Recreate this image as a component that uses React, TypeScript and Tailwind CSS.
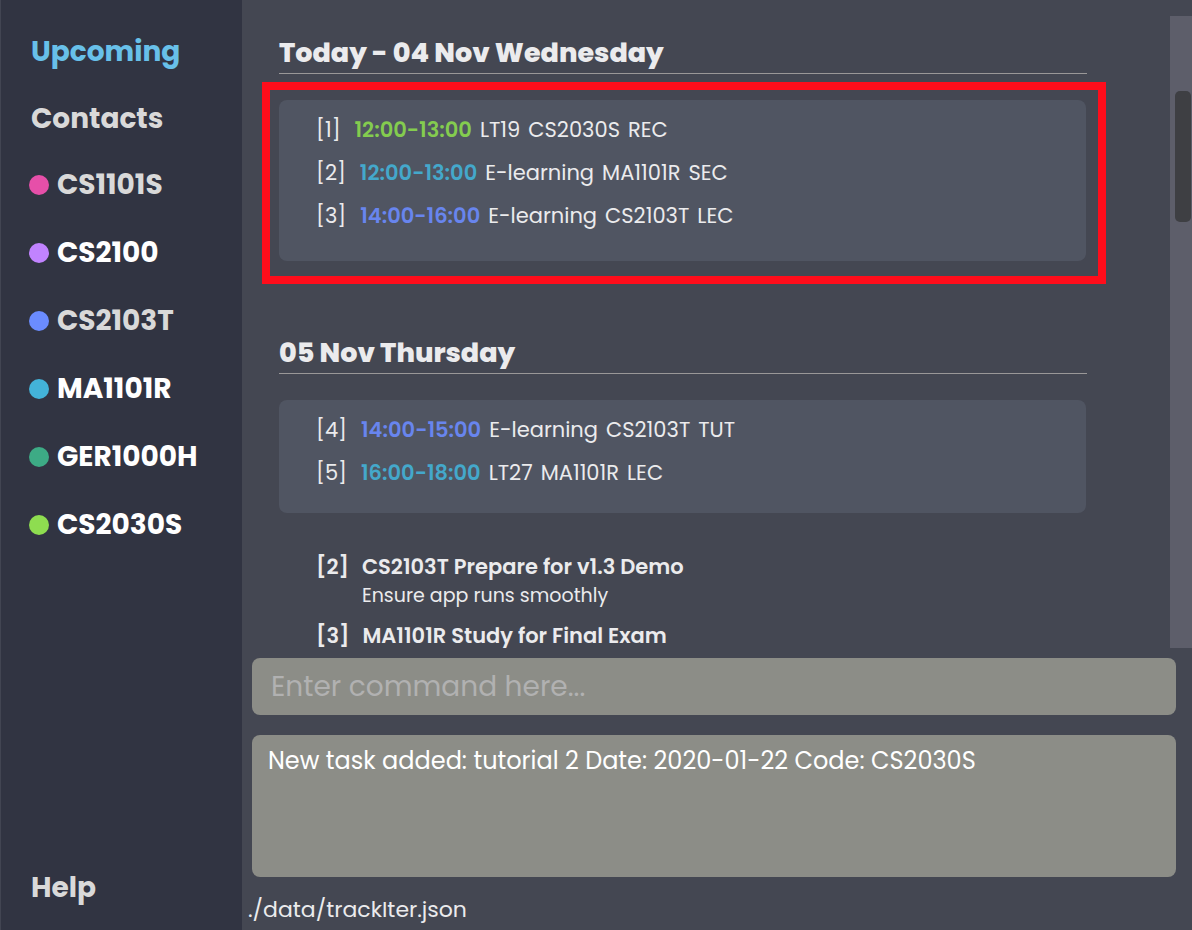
import React from "react";

type Lesson = { id: number; time: string; color: string; details: string[] };
type Task = { id: number; title: string; note?: string };

const modules = [
  { code: "CS1101S", dot: "bg-[#e64fa9]", text: "text-[#d9d9d9]" },
  { code: "CS2100", dot: "bg-[#c183ff]", text: "text-white" },
  { code: "CS2103T", dot: "bg-[#6b8cff]", text: "text-[#d9d9d9]" },
  { code: "MA1101R", dot: "bg-[#43b3d9]", text: "text-white" },
  { code: "GER1000H", dot: "bg-[#3dab85]", text: "text-white" },
  { code: "CS2030S", dot: "bg-[#8edd50]", text: "text-white" },
];

const today: Lesson[] = [
  { id: 1, time: "12:00-13:00", color: "text-[#84cc4f]", details: ["LT19", "CS2030S", "REC"] },
  { id: 2, time: "12:00-13:00", color: "text-[#44a8cb]", details: ["E-learning", "MA1101R", "SEC"] },
  { id: 3, time: "14:00-16:00", color: "text-[#6885ee]", details: ["E-learning", "CS2103T", "LEC"] },
];

const thursday: Lesson[] = [
  { id: 4, time: "14:00-15:00", color: "text-[#6885ee]", details: ["E-learning", "CS2103T", "TUT"] },
  { id: 5, time: "16:00-18:00", color: "text-[#44a8cb]", details: ["LT27", "MA1101R", "LEC"] },
];

const tasks: Task[] = [
  { id: 2, title: "CS2103T Prepare for v1.3 Demo", note: "Ensure app runs smoothly" },
  { id: 3, title: "MA1101R Study for Final Exam" },
];

function DayHeading({ children }: { children: React.ReactNode }) {
  return (
    <h2 className="-mr-px h-[41px] border-b border-[#9a9898] text-[27px] leading-10 font-extrabold whitespace-nowrap">
      {children}
    </h2>
  );
}

function LessonCard({ lessons, framed = false }: { lessons: Lesson[]; framed?: boolean }) {
  return (
    <div className={`relative mt-[26px] rounded-lg bg-[#505562] pt-2 pl-[37px] ${framed ? "pb-6" : "pb-[19px]"}`}>
      <ul>
        {lessons.map((l) => (
          <li key={l.id} className="flex h-[43px] items-center gap-2 text-[21px] whitespace-nowrap">
            <span className="mr-[6px]">[{l.id}]</span>
            <span className={`font-semibold ${l.color}`}>{l.time}</span>
            {l.details.map((d) => (
              <span key={d}>{d}</span>
            ))}
          </li>
        ))}
      </ul>
      {framed && (
        <div className="pointer-events-none absolute -top-[18px] -right-5 -bottom-[23px] -left-[17px] border-8 border-[#ff0d1b]" />
      )}
    </div>
  );
}

export default function App() {
  return (
    <div className="flex h-screen bg-[#444752] font-['Poppins','Inter',sans-serif] text-[#ebebed]">
      <nav className="flex w-[242px] shrink-0 flex-col border-l border-[#424552] bg-[#313442] pt-8 pb-[22px] text-[28px] leading-10 font-bold text-[#d9d9d9]">
        <div className="flex flex-col items-start gap-[27px] pl-[30px]">
          <button type="button" className="text-[#68c0e9]">Upcoming</button>
          <button type="button">Contacts</button>
        </div>
        <ul className="mt-[26px] flex flex-col gap-7 pl-7">
          {modules.map((m) => (
            <li key={m.code}>
              <button type="button" className={`flex items-center gap-2 ${m.text}`}>
                <span className={`size-5 rounded-full ${m.dot}`} />
                {m.code}
              </button>
            </li>
          ))}
        </ul>
        <button type="button" className="mt-auto self-start pl-[30px]">Help</button>
      </nav>

      <main className="flex min-w-0 flex-1 flex-col pt-4">
        <div className="flex min-h-0 flex-1">
          <div className="min-w-0 flex-1 overflow-hidden pt-[17px] pr-[84px] pl-[37px]">
            <section>
              <DayHeading>Today - 04 Nov Wednesday</DayHeading>
              <LessonCard lessons={today} framed />
            </section>
            <section className="mt-[72px]">
              <DayHeading>05 Nov Thursday</DayHeading>
              <LessonCard lessons={thursday} />
              <ul className="mt-[39px] flex flex-col gap-[11px] pl-[37px]">
                {tasks.map((t) => (
                  <li key={t.id} className="flex gap-[13px] leading-[29px] whitespace-nowrap">
                    <span className="text-[21px] font-semibold">[{t.id}]</span>
                    <div>
                      <h3 className="text-[21px] font-semibold">{t.title}</h3>
                      {t.note && <p className="text-[19px]">{t.note}</p>}
                    </div>
                  </li>
                ))}
              </ul>
            </section>
          </div>
          <div className="w-[22px] shrink-0 bg-[#5d5e6a] pt-[75px] pr-px pl-[5px]">
            <div className="h-[131px] rounded-[5px] bg-[#3e3f43]" />
          </div>
        </div>

        <div className="mt-[10px] mr-4 ml-[10px] flex flex-col gap-5">
          <input
            type="text"
            aria-label="Command"
            placeholder="Enter command here..."
            className="h-[57px] w-full rounded-lg bg-[#8c8d87] px-[19px] text-[28px] text-white outline-none placeholder:text-[#b1b1b1] placeholder:opacity-100"
          />
          <output className="block h-[142px] rounded-lg bg-[#8c8d87] px-4 pt-[10px] text-[24px] leading-8 text-white">
            New task added: tutorial 2 Date: 2020-01-22 Code: CS2030S
          </output>
        </div>
        <footer className="mt-[17px] mb-1 pl-[6px] text-[22px] leading-8">./data/trackIter.json</footer>
      </main>
    </div>
  );
}
